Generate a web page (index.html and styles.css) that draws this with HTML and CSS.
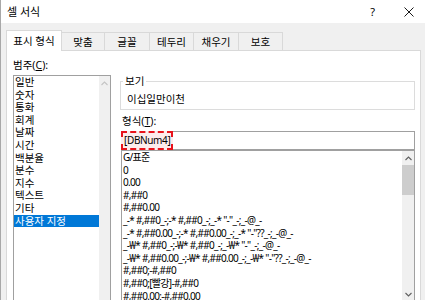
FILE: index.html
```html
<!DOCTYPE html>
<html lang="ko">
<head>
<meta charset="utf-8">
<title>셀 서식</title>
<link rel="stylesheet" href="styles.css">
</head>
<body>
<div class="window">
  <div class="titlebar">
    <span class="title">셀 서식</span>
    <div class="controls">
      <span class="help">?</span>
      <svg class="close" width="10" height="10" viewBox="0 0 10 10"><path d="M0.5 0.5 L9.5 9.5 M9.5 0.5 L0.5 9.5" stroke="#1a1a1a" stroke-width="1" fill="none"/></svg>
    </div>
  </div>
  <div class="content">
    <div class="tabs">
      <div class="tab active">표시 형식</div>
      <div class="tab w43">맞춤</div>
      <div class="tab w45">글꼴</div>
      <div class="tab w44">테두리</div>
      <div class="tab w45">채우기</div>
      <div class="tab w44">보호</div>
    </div>
    <div class="panel">
      <div class="col-left">
        <div class="label">범주(<u>C</u>):</div>
        <div class="listbox cat">
          <ul class="items">
            <li>일반</li>
            <li>숫자</li>
            <li>통화</li>
            <li>회계</li>
            <li>날짜</li>
            <li>시간</li>
            <li>백분율</li>
            <li>분수</li>
            <li>지수</li>
            <li>텍스트</li>
            <li>기타</li>
            <li class="selected">사용자 지정</li>
          </ul>
          <div class="vscroll cat-scroll">
            <div class="arrow"><svg width="7" height="5" viewBox="0 0 7 5"><path d="M0.5 4 L3.5 1 L6.5 4" stroke="#c4c4c4" stroke-width="1.1" fill="none"/></svg></div>
          </div>
        </div>
      </div>
      <div class="col-right">
        <fieldset class="sample">
          <legend>보기</legend>
          <div class="sample-text">이십일만이천</div>
        </fieldset>
        <div class="label fmt-label">형식(<u>T</u>):</div>
        <div class="input"><span class="mark">[DBNum4]</span></div>
        <div class="listbox fmt">
          <ul class="items">
            <li>G/표준</li>
            <li>0</li>
            <li>0.00</li>
            <li>#,##0</li>
            <li>#,##0.00</li>
            <li>_-* #,##0_-;-* #,##0_-;_-* "-"_-;_-@_-</li>
            <li>_-* #,##0.00_-;-* #,##0.00_-;_-* "-"??_-;_-@_-</li>
            <li>_-₩* #,##0_-;-₩* #,##0_-;_-₩* "-"_-;_-@_-</li>
            <li>_-₩* #,##0.00_-;-₩* #,##0.00_-;_-₩* "-"??_-;_-@_-</li>
            <li>#,##0;-#,##0</li>
            <li>#,##0;[빨강]-#,##0</li>
            <li>#,##0.00;-#,##0.00</li>
          </ul>
          <div class="vscroll fmt-scroll">
            <div class="arrow"><svg width="7" height="5" viewBox="0 0 7 5"><path d="M0.5 4 L3.5 1 L6.5 4" stroke="#606060" stroke-width="1.1" fill="none"/></svg></div>
            <div class="thumb"></div>
            <div class="track"></div>
            <div class="arrow"><svg width="7" height="5" viewBox="0 0 7 5"><path d="M0.5 1 L3.5 4 L6.5 1" stroke="#606060" stroke-width="1.1" fill="none"/></svg></div>
          </div>
        </div>
      </div>
    </div>
  </div>
</div>
</body>
</html>
```

FILE: styles.css
```css
* { box-sizing: border-box; }
html, body {
  margin: 0;
  padding: 0;
}
body {
  width: 425px;
  height: 300px;
  overflow: hidden;
  background: #f0f0f0;
  font-family: "Noto Sans", "Noto Sans CJK KR", sans-serif;
  font-size: 10.5px;
  color: #000;
}
.window {
  height: 300px;
  border-left: 1px solid #a8a8a8;
  display: flex;
  flex-direction: column;
}
.titlebar {
  height: 23px;
  flex: none;
  background: #fff;
  display: flex;
  align-items: center;
  justify-content: space-between;
  padding: 0 11px 0 6px;
}
.title {
  font-size: 11px;
  line-height: 14px;
}
.controls {
  display: flex;
  align-items: center;
  gap: 29px;
}
.help {
  font-size: 11px;
  line-height: 14px;
}
.close { display: block; }

.content {
  flex: 1;
  padding: 7px 4px 0 5px;
  display: flex;
  flex-direction: column;
}
.tabs {
  display: flex;
  align-items: flex-end;
  height: 20px;
  position: relative;
  z-index: 1;
}
.tab {
  height: 18px;
  border-top: 1px solid #d9d9d9;
  border-right: 1px solid #d9d9d9;
  background: #f0f0f0;
  display: flex;
  align-items: center;
  justify-content: center;
  line-height: 14px;
}
.tab.active {
  width: 56px;
  height: 21px;
  margin-bottom: -1px;
  background: #fff;
  border-left: 1px solid #d9d9d9;
  padding-bottom: 1px;
}
.w43 { width: 43px; }
.w44 { width: 44px; }
.w45 { width: 45px; }

.panel {
  height: 270px;
  flex: none;
  background: #fff;
  border: 1px solid #d9d9d9;
  display: grid;
  grid-template-columns: 98px 295px;
  column-gap: 9px;
  padding: 7px 5px 0 6px;
  align-items: start;
}
.label {
  line-height: 14px;
  height: 14px;
  margin-bottom: 3px;
}
.listbox {
  border: 1px solid #a0a0a0;
  display: flex;
  background: #fff;
}
.items {
  list-style: none;
  margin: 0;
  padding: 0;
  flex: 1;
  min-width: 0;
}
.items li {
  line-height: 12.6px;
  height: 12.6px;
  padding-left: 1px;
  white-space: nowrap;
}
.items li.selected {
  background: #0078d7;
  color: #fff;
}
.cat {
  height: 240px;
}
.vscroll {
  background: #f0f0f0;
  display: flex;
  flex-direction: column;
}
.cat-scroll { width: 11px; }
.fmt-scroll { width: 12px; }
.arrow {
  height: 14px;
  flex: none;
  display: flex;
  align-items: center;
  justify-content: center;
}
.arrow svg { display: block; }
.thumb {
  height: 30px;
  flex: none;
  background: #cdcdcd;
}
.track { flex: 1; }

.col-right {
  margin-top: 17px;
}
.sample {
  margin: 0;
  border: 1px solid #dcdcdc;
  padding: 5px 4px 3px 2px;
  min-width: 0;
}
.sample legend {
  padding: 0 2px;
  line-height: 13px;
}
.sample-text {
  line-height: 13px;
  padding-left: 4px;
}
.fmt-label {
  margin: 5px 0 3px 2px;
  line-height: 13px;
  height: 13px;
}
.input {
  margin-left: 1px;
  height: 19px;
  border: 1px solid #a0a0a0;
  display: flex;
}
.mark {
  margin: -1px 0 -1px -1px;
  border: 2px dashed #e8121b;
  background: #fdecec;
  padding: 0 1px;
  display: flex;
  align-items: center;
  line-height: 13px;
  font-size: 10px;
  letter-spacing: -0.35px;
}
.fmt {
  margin-left: 1px;
  height: 152px;
}
.fmt .items li {
  padding-left: 1px;
  font-size: 10px;
  letter-spacing: -0.7px;
}
```
